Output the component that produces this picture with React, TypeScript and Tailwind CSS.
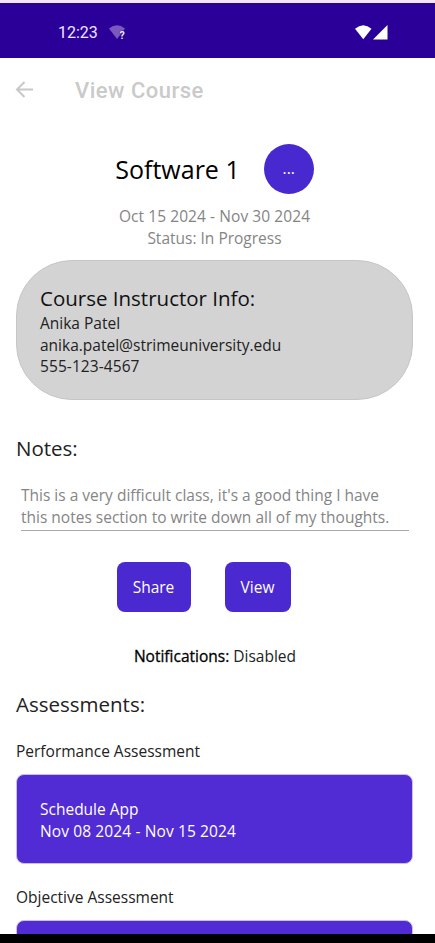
import React from "react";

function StatusBar() {
  return (
    <div className="flex h-[55px] items-center bg-[#2b0098] pt-[4px] pl-[58px] pr-[47px]">
      <span className="font-[Roboto] text-[16px] leading-5 text-[#f0e6ff]">12:23</span>
      <svg className="ml-[11px] h-4 w-[18px]" viewBox="0 0 18 16">
        <path d="M0 3.5Q8 -3 16 3.5L8 14Z" fill="#7a58bd" />
        <text x="10.5" y="13.5" fontFamily="Roboto" fontSize="10.5" fontWeight="700" fill="#f4ecff" stroke="#2b0098" strokeWidth="0.8" paintOrder="stroke">?</text>
      </svg>
      <svg className="ml-auto h-[15px] w-[33px]" viewBox="0 0 33 15">
        <path d="M0 3.8Q8.2 -3.4 16.5 3.8L8.3 14.3Z" fill="#fff" />
        <path d="M32.5 0V14.5H18Z" fill="#fff" />
      </svg>
    </div>
  );
}

function Assessment({ kind, name, dates }: { kind: string; name: string; dates: string }) {
  return (
    <section className="mb-[23px]">
      <h3 className="mb-[11px] h-[22px]">{kind}</h3>
      <div className="h-[90px] rounded-[8px] border border-[#c8bfee] bg-[#512bd4] px-[23px] pt-[23px] leading-[22px] text-white">
        <p>{name}</p>
        <p className="tracking-[0.12px]">{dates}</p>
      </div>
    </section>
  );
}

export default function App() {
  return (
    <div className="flex h-[943px] w-[435px] flex-col overflow-hidden border-t-[3px] border-b-[9px] border-t-[#f6e4f8] border-b-black bg-white font-['Open_Sans','Noto_Sans',sans-serif] text-[15.5px] leading-[21.8px] text-[#222]">
      <StatusBar />
      <header className="flex h-16 shrink-0 items-center pl-[15px]">
        <svg className="h-[18px] w-[18px]" viewBox="0 0 18 18" fill="none" stroke="#c8c8c8" strokeWidth="2">
          <path d="M18 8.5H2M9.5 1L2 8.5L9.5 16" />
        </svg>
        <h1 className="ml-[42px] pt-[2px] font-[Roboto] text-[22px] font-medium leading-7 tracking-[0.5px] text-[#cacaca]">View Course</h1>
      </header>
      <main className="min-h-0 flex-1 overflow-hidden pr-[22px] pl-[16px] pt-[21px]">
        <div className="flex h-[51px] items-center justify-center pt-px">
          <h2 className="pb-px text-[25px] leading-[34px] text-black">Software 1</h2>
          <button className="ml-[24px] h-[50px] w-[50px] rounded-full bg-[#4829d0] text-white">...</button>
        </div>
        <div className="mt-[12px] text-center text-[#858585]">
          <p className="tracking-[0.08px]">Oct 15 2024 - Nov 30 2024</p>
          <p className="leading-[21px]">Status: In Progress</p>
        </div>
        <section className="mt-[11px] h-[140px] rounded-[56px] border border-[#c6c6c6] bg-[#d3d3d3] px-[23px] pt-[24px]">
          <h2 className="text-[20.5px] leading-[27px] text-[#111]">Course Instructor Info:</h2>
          <div className="pt-px">
            <p>Anika Patel</p>
            <p>anika.patel@strimeuniversity.edu</p>
            <p className="tracking-[0.08px]">555-123-4567</p>
          </div>
        </section>
        <h2 className="mt-[35px] text-[20.5px] leading-[27px]">Notes:</h2>
        <div className="mr-[4px] ml-[5px] mt-[22px] h-[47px] border-b border-[#a9a9a9] pt-px text-[#858585]">
          <p>This is a very difficult class, it's a good thing I have</p>
          <p>this notes section to write down all of my thoughts.</p>
        </div>
        <div className="mt-[31px] flex justify-center gap-[34px] pr-[22px] text-white">
          <button className="h-[50px] w-[74px] rounded-[8px] bg-[#4a29d0] pt-[2px]">Share</button>
          <button className="h-[50px] w-[66px] rounded-[8px] bg-[#4a29d0] pt-[2px]">View</button>
        </div>
        <p className="mt-[34px] h-[22px] pl-px text-center"><span className="text-black [-webkit-text-stroke:0.3px_black]">Notifications:</span> Disabled</p>
        <h2 className="mt-[23px] mb-[23px] text-[20.5px] leading-[27px]">Assessments:</h2>
        <Assessment kind="Performance Assessment" name="Schedule App" dates="Nov 08 2024 - Nov 15 2024" />
        <Assessment kind="Objective Assessment" name="" dates="" />
      </main>
    </div>
  );
}
